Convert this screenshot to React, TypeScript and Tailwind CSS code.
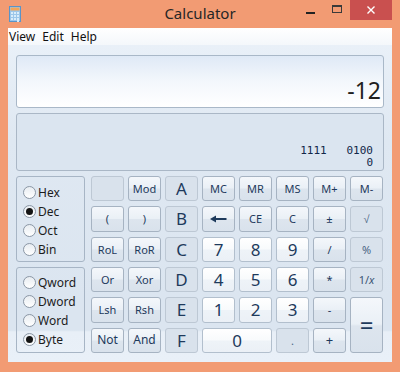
import React from 'react';

type Variant = 'op' | 'num' | 'off';

const variantClass: Record<Variant, string> = {
  op: 'border-[#a6b3c2] bg-[linear-gradient(to_bottom,#f4f7fb_0%,#eaf0f6_48%,#dde5ee_52%,#d9e2ec_100%)]',
  num: 'border-[#b2bfcd] bg-[linear-gradient(to_bottom,#ffffff_0%,#f8fafc_48%,#eef3f8_52%,#ebf0f6_100%)]',
  off: 'border-[#bdc8d4] bg-[#d9e2ec]',
};

interface KeyProps {
  label: React.ReactNode;
  v?: Variant;
  size?: string;
  className?: string;
}

const Key: React.FC<KeyProps> = ({ label, v = 'op', size = 'text-[11px]', className = '' }) => (
  <div
    className={`flex items-center justify-center rounded-[3px] border leading-none text-[#1e3a5c] ${variantClass[v]} ${size} ${className}`}
  >
    {label}
  </div>
);

const Radio: React.FC<{ label: string; checked?: boolean }> = ({ label, checked }) => (
  <div className="flex h-[19px] items-center">
    <div className="flex h-[13px] w-[13px] items-center justify-center rounded-full border border-[#8b97a5] bg-[linear-gradient(to_bottom,#e8edf2,#ffffff)]">
      {checked && <div className="h-[7px] w-[7px] rounded-full bg-[#141414]" />}
    </div>
    <span className="ml-[2px] text-[12px] leading-none text-[#1c1c1c]">{label}</span>
  </div>
);

const BackArrow = () => (
  <svg width="17" height="8" viewBox="0 0 17 8">
    <path d="M4 4 H16.5" stroke="#1e3a5c" strokeWidth="2" />
    <path d="M0 4 L6 0.5 L6 7.5 Z" fill="#1e3a5c" />
  </svg>
);

const CalcIcon = () => (
  <svg width="12" height="16" viewBox="0 0 12 16">
    <rect x="0.5" y="0.5" width="11" height="15" fill="#9cc6ea" stroke="#5a94c8" />
    <rect x="1.5" y="1.5" width="9" height="3" fill="#f3a55a" />
    <g fill="#d9ecfa">
      <rect x="2" y="6" width="2" height="2" />
      <rect x="5" y="6" width="2" height="2" />
      <rect x="8" y="6" width="2" height="2" />
      <rect x="2" y="9" width="2" height="2" />
      <rect x="5" y="9" width="2" height="2" />
      <rect x="8" y="9" width="2" height="2" />
      <rect x="2" y="12" width="2" height="2" />
      <rect x="5" y="12" width="2" height="2" />
      <rect x="8" y="12" width="2" height="5" />
    </g>
  </svg>
);

const App: React.FC = () => {
  const big = 'text-[17px]';
  return (
    <div className="flex h-[372px] w-[400px] flex-col bg-[#f29b73] font-['Noto_Sans',sans-serif]">
      {/* title bar */}
      <div className="grid h-[28px] grid-cols-[1fr_auto_1fr]">
        <div className="pl-[9px] pt-[6px]">
          <CalcIcon />
        </div>
        <div className="pt-[3px] text-[15px] leading-[20px] text-[#262626]">Calculator</div>
        <div className="flex justify-end pr-[8px]">
          <div className="flex h-[20px] w-[27px] items-center justify-center">
            <div className="mt-[5px] h-[2px] w-[9px] bg-[#222]" />
          </div>
          <div className="flex h-[20px] w-[26px] items-center justify-center">
            <div className="mb-[2px] h-[8px] w-[10px] border border-t-2 border-[#3a3a3a]" />
          </div>
          <div className="flex h-[20px] w-[42px] items-center justify-center bg-[#c9504f]">
            <svg width="8" height="8" viewBox="0 0 8 8">
              <path d="M0.5 0.5 L7.5 7.5 M7.5 0.5 L0.5 7.5" stroke="#fff" strokeWidth="1.4" />
            </svg>
          </div>
        </div>
      </div>

      {/* client */}
      <div className="mx-[8px] mb-[10px] flex flex-1 flex-col">
        <div className="flex h-[17px] items-center bg-[linear-gradient(to_bottom,#ffffff,#f4f7fb)] pl-[1px] text-[12px] leading-none text-[#111]">
          <span className="mr-[7px]">View</span>
          <span className="mr-[7px]">Edit</span>
          <span>Help</span>
        </div>
        <div className="flex flex-1 flex-col bg-[linear-gradient(to_bottom,#e9f0f8_0%,#dfe8f2_30%,#dbe5f0_80%,#dbe5f0_90%,#e8eff7_90.5%,#e9f0f8_100%)] px-[8px] pt-[10px]">
          <div className="flex h-[53px] items-end justify-end rounded-[3px] border border-[#a9b8c8] bg-[linear-gradient(to_bottom,#dfe9f6_0%,#f3f7fc_50%,#ffffff_100%)] pb-[5px] pr-[2px]">
            <span className="text-[23px] leading-none text-[#1f1f1f]">-12</span>
          </div>
          <div className="mt-[5px] flex h-[58px] flex-col items-end justify-end rounded-[3px] border border-[#aab7c6] bg-[#dbe5f0] pb-[1px] pr-[10px] font-['DejaVu_Sans_Mono',monospace] text-[11px] font-medium leading-[12px] text-[#122749]">
            <div className="whitespace-pre">1111   0100</div>
            <div>0</div>
          </div>

          <div className="mt-[5px] flex gap-[6px]">
            <div className="flex w-[69px] flex-col gap-[5px]">
              <div className="flex h-[86px] flex-col rounded-[3px] border border-[#a7b5c5] pl-[6px] pt-[6px]">
                <Radio label="Hex" />
                <Radio label="Dec" checked />
                <Radio label="Oct" />
                <Radio label="Bin" />
              </div>
              <div className="flex h-[86px] flex-col rounded-[3px] border border-[#a7b5c5] pl-[6px] pt-[5px]">
                <Radio label="Qword" />
                <Radio label="Dword" />
                <Radio label="Word" />
                <Radio label="Byte" checked />
              </div>
            </div>

            <div className="grid h-[177px] grid-cols-[repeat(8,33px)] grid-rows-6 gap-x-[4px] gap-y-[5px]">
              <Key label="" v="off" />
              <Key label="Mod" />
              <Key label="A" v="off" size={big} />
              <Key label="MC" />
              <Key label="MR" />
              <Key label="MS" />
              <Key label="M+" />
              <Key label="M-" />

              <Key label="(" />
              <Key label=")" />
              <Key label="B" v="off" size={big} />
              <Key label={<BackArrow />} />
              <Key label="CE" />
              <Key label="C" />
              <Key label="±" />
              <Key label="√" v="off" className="text-[#4a6584]" />

              <Key label="RoL" />
              <Key label="RoR" />
              <Key label="C" v="off" size={big} />
              <Key label="7" v="num" size={big} />
              <Key label="8" v="num" size={big} />
              <Key label="9" v="num" size={big} />
              <Key label="/" />
              <Key label="%" v="off" className="text-[#4a6584]" />

              <Key label="Or" />
              <Key label="Xor" />
              <Key label="D" v="off" size={big} />
              <Key label="4" v="num" size={big} />
              <Key label="5" v="num" size={big} />
              <Key label="6" v="num" size={big} />
              <Key label="*" />
              <Key
                label={
                  <span>
                    1/<span className="italic">x</span>
                  </span>
                }
                v="off"
                className="text-[#3c5676]"
              />

              <Key label="Lsh" />
              <Key label="Rsh" />
              <Key label="E" v="off" size={big} />
              <Key label="1" v="num" size={big} />
              <Key label="2" v="num" size={big} />
              <Key label="3" v="num" size={big} />
              <Key label="-" />
              <Key label="=" size="text-[24px]" className="row-span-2" />

              <Key label="Not" size="text-[12px]" />
              <Key label="And" size="text-[12px]" />
              <Key label="F" v="off" size={big} />
              <Key label="0" v="num" size={big} className="col-span-2" />
              <Key label="." v="off" className="text-[#4a6584]" />
              <Key label="+" size="text-[13px]" />
            </div>
          </div>
        </div>
      </div>
    </div>
  );
};

export default App;
